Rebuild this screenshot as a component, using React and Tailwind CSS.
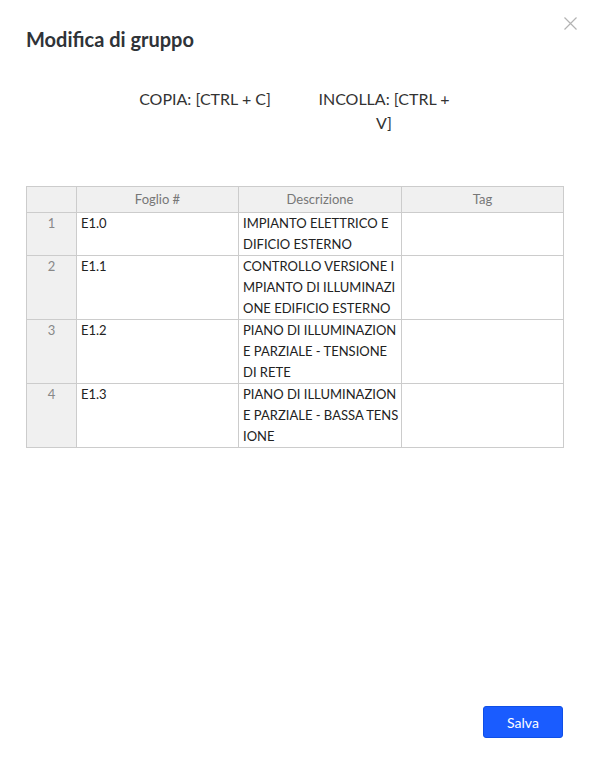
const rows = [
  { n: 1, sheet: 'E1.0', desc: ['IMPIANTO ELETTRICO E', 'DIFICIO ESTERNO'], tag: '' },
  { n: 2, sheet: 'E1.1', desc: ['CONTROLLO VERSIONE I', 'MPIANTO DI ILLUMINAZI', 'ONE EDIFICIO ESTERNO'], tag: '' },
  { n: 3, sheet: 'E1.2', desc: ['PIANO DI ILLUMINAZION', 'E PARZIALE - TENSIONE', 'DI RETE'], tag: '' },
  { n: 4, sheet: 'E1.3', desc: ['PIANO DI ILLUMINAZION', 'E PARZIALE - BASSA TENS', 'IONE'], tag: '' },
]

export default function App() {
  return (
    <div className="relative w-[591px] h-[762px] bg-white font-['Lato','Liberation_Sans',sans-serif] text-[#333]">
      {/* close */}
      <button className="absolute top-[17px] right-[14px] w-[13px] h-[13px]">
        <svg width="13" height="13" viewBox="0 0 13 13" stroke="#b3b3b3" strokeWidth="1.2" fill="none">
          <path d="M0.5 0.5L12.5 12.5M12.5 0.5L0.5 12.5" />
        </svg>
      </button>

      <div className="flex flex-col h-full pl-[26px] pr-[28px]">
        <h2 className="pt-[26px] text-[20px] leading-[26px] font-bold text-[#2f3338]">Modifica di gruppo</h2>

        {/* shortcuts */}
        <div className="flex justify-center gap-[39px] mt-[35px] text-[16px] leading-[24px] text-[#333]">
          <div className="w-[140px] text-center">COPIA: [CTRL + C]</div>
          <div className="w-[140px] text-center">INCOLLA: [CTRL + V]</div>
        </div>

        {/* table */}
        <table className="mt-[51px] border-collapse table-fixed w-[537px] text-[13px] leading-[21px]">
          <colgroup>
            <col className="w-[50px]" />
            <col className="w-[162px]" />
            <col className="w-[163px]" />
            <col className="w-[162px]" />
          </colgroup>
          <thead>
            <tr className="bg-[#f0f0f0] text-[#777]">
              <th className="border border-[#ccc] h-[26px] font-normal"></th>
              <th className="border border-[#ccc] h-[26px] font-normal">Foglio #</th>
              <th className="border border-[#ccc] h-[26px] font-normal">Descrizione</th>
              <th className="border border-[#ccc] h-[26px] font-normal">Tag</th>
            </tr>
          </thead>
          <tbody>
            {rows.map(r => (
              <tr key={r.n}>
                <td className="border border-[#ccc] bg-[#f0f0f0] text-[#888] text-center align-top">{r.n}</td>
                <td className="border border-[#ccc] px-[4px] align-top text-[#222]">{r.sheet}</td>
                <td className="border border-[#ccc] pl-[4px] pr-[1px] align-top text-[#222] whitespace-nowrap overflow-hidden">
                  {r.desc.map((line, i) => <div key={i}>{line}</div>)}
                </td>
                <td className="border border-[#ccc] px-[4px] align-top">{r.tag}</td>
              </tr>
            ))}
          </tbody>
        </table>

        <div className="flex-1" />

        <div className="flex justify-end pb-[24px]">
          <button className="w-[80px] h-[32px] rounded-[3px] bg-[#1a5cff] border border-[#0f4fe6] text-white text-[14px]">
            Salva
          </button>
        </div>
      </div>
    </div>
  )
}
